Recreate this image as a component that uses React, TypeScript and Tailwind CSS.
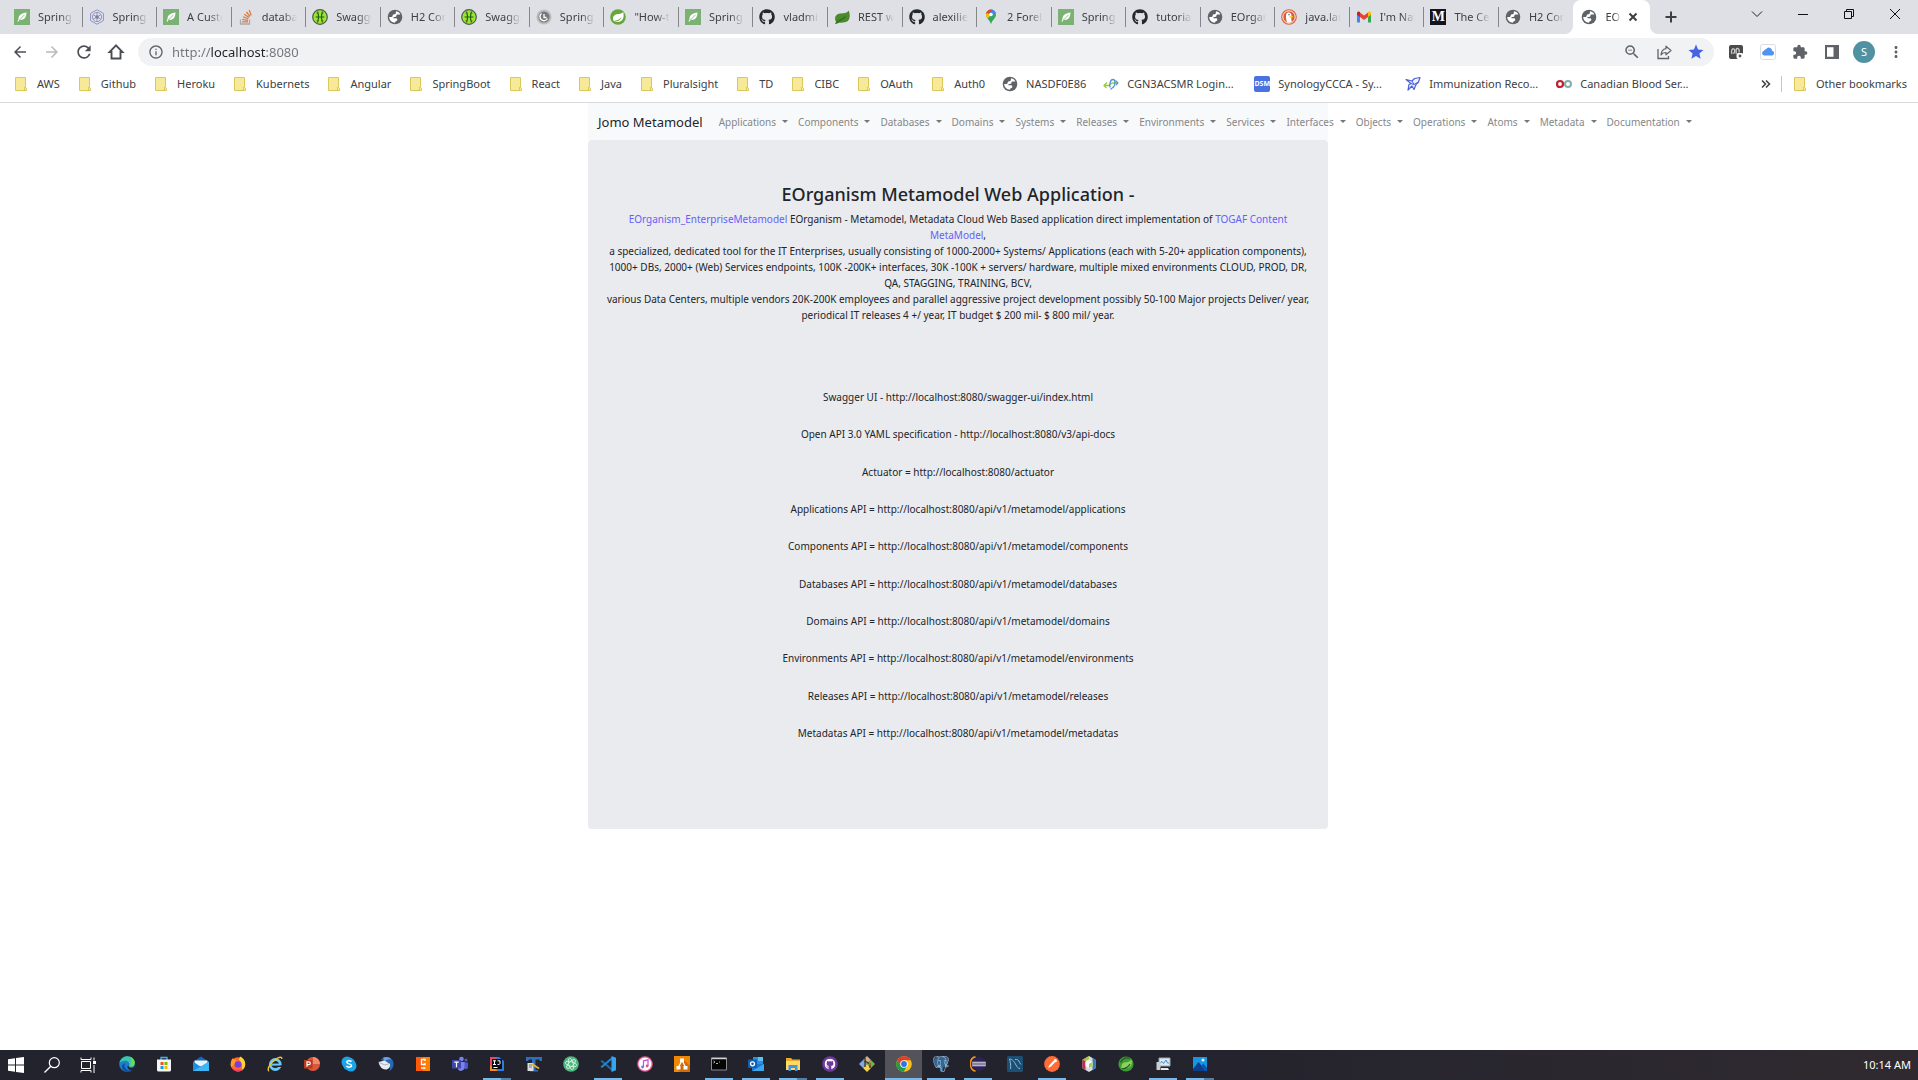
import React from "react";
import { FaGithub } from "react-icons/fa";
import { SiPostgresql } from "react-icons/si";
import {
  MdArrowBack,
  MdArrowForward,
  MdExtension,
  MdInfoOutline,
  MdMoreVert,
  MdRefresh,
  MdStar,
  MdZoomOut,
} from "react-icons/md";

type IconProps = { children: React.ReactNode };

function Svg({ children }: IconProps) {
  return (
    <svg viewBox="0 0 16 16" className="block size-4 shrink-0" aria-hidden="true">
      {children}
    </svg>
  );
}

/* ---------- favicons ---------- */

const Baeldung = () => (
  <Svg>
    <path d="M0 0h16v16H0Z" fill="#7bb274" />
    <path d="M12.500 3.500C8 4 4.500 6 4.500 10l-1 2.500.9.300 1.100-2c5 .7 6.800-2.800 7-7.300Z" fill="#fff" />
    <path d="M10.500 5.800 5.500 11" stroke="#7bb274" strokeWidth=".8" />
  </Svg>
);

const Globe = () => (
  <Svg>
    <circle cx="8" cy="8" r="7.300" fill="#5f6368" />
    <path
      d="M9.300 2.300c1.800.4 3.300 1.500 4.100 3.200h-2.700c-.8 0-1.300.5-1.300 1.200 0 .8-.6 1.200-1.400 1.200H6.500v1.400h2.400c.9 0 1.400.7 1.400 1.500 0 .9-.6 1.300-1.400 1.400-.5.100-.8.500-.8 1.500C4.800 13.600 2.300 11.200 2.200 8c1 .1 2.300.3 3-.3.700-.6.300-1.500 1.100-2.100.8-.6 1.700-.2 2.300-.9.600-.7-.1-1.700.7-2.400Z"
      fill="#fff"
    />
  </Svg>
);

const Github = () => <FaGithub className="size-4 shrink-0 text-[#24292f]" />;

const StackOverflow = () => (
  <Svg>
    <path d="M2.500 10.500v4.500h9v-4.500" fill="none" stroke="#a9a9ac" strokeWidth="1.300" />
    <path
      d="M4.200 12.800h5.800M4.300 10.400l5.700.9M4.900 7.800l5.400 2M6.300 5.200l4.700 3.400M8.400 3l3.700 4.500M11.200 1l2 5.500"
      stroke="#d97a3a"
      strokeWidth="1.200"
    />
  </Svg>
);

const Hexagon = () => (
  <Svg>
    <path d="M8 .8 14.400 4.400v7.200L8 15.200 1.600 11.600V4.400Z" fill="#e4e4ee" stroke="#8a90cf" />
    <circle cx="8" cy="8" r="4.600" fill="none" stroke="#8b8fa8" strokeWidth=".9" />
    <path d="M8 3.500v9M4 5.700l8 4.600M12 5.700l-8 4.600" stroke="#8b8fa8" strokeWidth=".9" />
    <circle cx="8" cy="8" r="1.800" fill="#7b7f9c" />
  </Svg>
);

const Swagger = () => (
  <Svg>
    <circle cx="8" cy="8" r="7.300" fill="#94ea30" stroke="#4c5a4a" strokeWidth="1.200" />
    <path
      d="M5.500 2.500c1.300 3.500 1.300 7.500 0 11M10.500 2.500c-1.300 3.500-1.300 7.500 0 11M3.500 8h9"
      fill="none"
      stroke="#2d5a1c"
      strokeWidth="1.200"
    />
    <path d="M4.500 4.200h1.500M4.500 11.800h1.500M10 4.200h1.500M10 11.800h1.500" stroke="#b0402c" />
  </Svg>
);

const GraySpiral = () => (
  <Svg>
    <circle cx="8" cy="8" r="7.600" fill="#bdbdbf" />
    <circle cx="8" cy="8" r="5.600" fill="#77787a" />
    <path d="M5.500 4.500a4 4 0 1 0 6 5" fill="none" stroke="#fff" strokeWidth="1.400" />
    <path d="M8 5v3.500h2.500" fill="none" stroke="#fff" strokeWidth="1.300" />
  </Svg>
);

const SpringRing = () => (
  <Svg>
    <circle cx="8" cy="8" r="7.800" fill="#68a63c" />
    <path
      d="M13.200 3c.9 3.200.8 8.600-3.700 9.700-2.300.6-4.600.3-6 .2 3.500-.2 7-1.700 8.200-5-1.800 2.300-4.800 3.400-8 4C2 8.700 3.500 6 6.800 5.300c2.500-.5 5-.5 6.400-2.300Z"
      fill="#fff"
    />
  </Svg>
);

const GreenLeaf = () => (
  <Svg>
    <path
      d="M14.700 1.500c2 5 1.400 10-3 11.600-3 1-6 .2-8.300 1.400l-1-1C-.5 9 1.500 5.300 6 4.600c3.300-.5 6.700.2 8.700-3.100Z"
      fill="#4a8a2c"
    />
    <path d="M1.500 14.800c3-4 7-4 10-7.200" fill="none" stroke="#2f6a1b" strokeWidth="1.200" />
  </Svg>
);

const MapsPin = () => (
  <Svg>
    <path d="M8 .5a5 5 0 0 1 5 5c0 4-4.200 5.500-5 10-.8-4.500-5-6-5-10a5 5 0 0 1 5-5Z" fill="#34a853" />
    <path d="M4.200 2.200A5 5 0 0 1 9.500.7L5 6.500 3 5.500c0-1.300.5-2.500 1.200-3.300Z" fill="#ea4335" />
    <path d="M9.500.7a5 5 0 0 1 3.200 3.100L8 8.500 6.500 4.400Z" fill="#4285f4" />
    <path d="M3 5.500c0 1.800.8 3 1.800 4.100L8 6 4 4Z" fill="#fbbc04" />
    <circle cx="8" cy="5.500" r="1.800" fill="#fff" />
  </Svg>
);

const DuckDuck = () => (
  <Svg>
    <circle cx="8" cy="8" r="7.800" fill="#d9603b" />
    <circle cx="8" cy="8" r="6.200" fill="none" stroke="#fff" strokeWidth=".9" />
    <path
      d="M6 13.500C5 10 4.500 6.500 5.500 4.500 7 2.500 10.500 3.500 10.500 6.500c0 1.500-.8 3 .3 6.300-1.300 1-3.300 1.200-4.800.7Z"
      fill="#fff"
    />
    <path d="M8.500 7.200h4l-1.500 1.600H8.500Z" fill="#fdd20a" />
    <circle cx="8" cy="5.700" r=".7" fill="#2d4f8e" />
  </Svg>
);

const Gmail = () => (
  <Svg>
    <path d="M1 4v9.500h3V7Z" fill="#4285f4" />
    <path d="M15 4v9.500h-3V7Z" fill="#34a853" />
    <path d="M4 3.500 8 6.500l4-3V8l-4 3-4-3Z" fill="#ea4335" />
    <path d="M1 4.300C1 2.500 3 2 4 3v5L1 5.800Z" fill="#c5221f" />
    <path d="M15 4.300C15 2.500 13 2 12 3v5l3-2.200Z" fill="#fbbc04" />
  </Svg>
);

const Medium = () => (
  <span className="flex size-4 shrink-0 items-center justify-center bg-[#12151c] font-['Liberation_Serif',serif] text-sm leading-4 font-bold text-white">
    M
  </span>
);

const Folder = () => (
  <Svg>
    <path d="M2.500 1.500h10v10l1 1v2h-11Z" fill="#f6e998" stroke="#dcc75a" />
    <path d="M11.500 14.500v-3.500" stroke="#dcc75a" />
  </Svg>
);

const Cgn = () => (
  <Svg>
    <path d="M1 9.500h4.500c1.500 0 2-2.500 4-2.500H15" fill="none" stroke="#9ac83c" strokeWidth="1.300" />
    <path d="M4 6.500 1 9.500 3.500 12" fill="none" stroke="#9ac83c" strokeWidth="1.200" />
    <path d="M7 11.500c-.8-3 .3-8 3-8s2.500 5.500.5 7.500c-1 1-2.300 1.300-3 2.500" fill="none" stroke="#4b93d2" strokeWidth="1.300" />
    <path d="m12.500 4.500 2.500 2.500-2 2" fill="none" stroke="#4b93d2" strokeWidth="1.100" />
  </Svg>
);

const Dsm = () => (
  <span className="flex size-4 shrink-0 items-center justify-center rounded-xs bg-[#4a72e0] text-[7px] leading-4 font-bold text-white">
    DSM
  </span>
);

const Bird = () => (
  <Svg>
    <path
      d="M1 3.500 7 5l2.500-2.500 5.500-1-1.500 4.500-2.500 2.500-2 5-2-3.500-4 4 1-5.500L6 7.500Z"
      fill="#eef1ff"
      stroke="#4a62d8"
      strokeWidth="1.200"
      strokeLinejoin="round"
    />
    <path d="M7 5l2 3.500 4.500-2.500M6 7.500l3 1" fill="none" stroke="#4a62d8" />
  </Svg>
);

const Blood = () => (
  <Svg>
    <circle cx="12" cy="8" r="3" fill="none" stroke="#7fb0ab" strokeWidth="2" />
    <circle cx="4" cy="8" r="3" fill="none" stroke="#c2202f" strokeWidth="2.200" />
  </Svg>
);

/* ---------- browser chrome ---------- */

const tabs: { title: string; Icon: React.FC }[] = [
  { title: "Spring Boot", Icon: Baeldung },
  { title: "Spring Data", Icon: Hexagon },
  { title: "A Custom", Icon: Baeldung },
  { title: "database", Icon: StackOverflow },
  { title: "Swagger", Icon: Swagger },
  { title: "H2 Console", Icon: Globe },
  { title: "Swagger", Icon: Swagger },
  { title: "Spring Boot", Icon: GraySpiral },
  { title: "\"How-to\"", Icon: SpringRing },
  { title: "Spring Boot", Icon: Baeldung },
  { title: "vladmi", Icon: Github },
  { title: "REST with", Icon: GreenLeaf },
  { title: "alexilie", Icon: Github },
  { title: "2 Forel", Icon: MapsPin },
  { title: "Spring Boot", Icon: Baeldung },
  { title: "tutorials", Icon: Github },
  { title: "EOrganism", Icon: Globe },
  { title: "java.lang", Icon: DuckDuck },
  { title: "I'm Nat", Icon: Gmail },
  { title: "The Cen", Icon: Medium },
  { title: "H2 Console", Icon: Globe },
];

const bookmarks: { title: string; Icon: React.FC; long?: boolean }[] = [
  { title: "AWS", Icon: Folder },
  { title: "Github", Icon: Folder },
  { title: "Heroku", Icon: Folder },
  { title: "Kubernets", Icon: Folder },
  { title: "Angular", Icon: Folder },
  { title: "SpringBoot", Icon: Folder },
  { title: "React", Icon: Folder },
  { title: "Java", Icon: Folder },
  { title: "Pluralsight", Icon: Folder },
  { title: "TD", Icon: Folder },
  { title: "CIBC", Icon: Folder },
  { title: "OAuth", Icon: Folder },
  { title: "Auth0", Icon: Folder },
  { title: "NASDF0E86", Icon: Globe },
  { title: "CGN3ACSMR Login...", Icon: Cgn, long: true },
  { title: "SynologyCCCA - Sy...", Icon: Dsm, long: true },
  { title: "Immunization Reco...", Icon: Bird, long: true },
  { title: "Canadian Blood Ser...", Icon: Blood, long: true },
];

const FADE = "[mask-image:linear-gradient(to_right,black_60%,transparent)]";

function TabStrip() {
  return (
    <div className="flex h-[34px] bg-[#dfe0e6] pl-2">
      <div className="flex min-w-0 max-w-[1642px] flex-1" role="tablist">
        {tabs.map(({ title, Icon }, i) => (
          <button key={i} role="tab" className="flex min-w-0 flex-1 items-center pl-1.5 text-left">
            <Icon />
            <span className={`ml-2 min-w-0 flex-1 overflow-hidden whitespace-nowrap ${FADE}`}>{title}</span>
            <span
              className={
                i === tabs.length - 1 ? "ml-2 h-5 w-px shrink-0" : "ml-2 h-5 w-px shrink-0 bg-[#85868b]"
              }
            />
          </button>
        ))}
        <div className="relative flex min-w-0 flex-1 items-center rounded-t-lg bg-white pl-2">
          <svg viewBox="0 0 8 8" className="absolute bottom-0 -left-2 size-2" aria-hidden="true">
            <path d="M8 0v8H0a8 8 0 0 0 8-8Z" fill="#fff" />
          </svg>
          <svg viewBox="0 0 8 8" className="absolute -right-2 bottom-0 size-2" aria-hidden="true">
            <path d="M0 0v8h8a8 8 0 0 1-8-8Z" fill="#fff" />
          </svg>
          <button role="tab" aria-selected="true" className="flex min-w-0 items-center">
            <Globe />
            <span className={`ml-2 w-4 overflow-hidden whitespace-nowrap ${FADE}`}>EOrganism</span>
          </button>
          <button aria-label="Close tab" className="ml-1">
            <svg viewBox="0 0 16 16" className="size-4" aria-hidden="true">
              <path d="m4.500 4.500 7 7m0-7-7 7" stroke="#3c4043" strokeWidth="2" />
            </svg>
          </button>
        </div>
      </div>
      <button aria-label="New tab" className="ml-[11px] flex w-5 items-center justify-center">
        <svg viewBox="0 0 16 16" className="size-4" aria-hidden="true">
          <path d="M8 2.500v11M2.500 8h11" stroke="#3c4043" strokeWidth="2" />
        </svg>
      </button>
      <div className="ml-auto flex h-7">
        <button aria-label="Search tabs" className="flex w-[46px] items-center justify-center">
          <svg viewBox="0 0 12 12" className="size-3" aria-hidden="true">
            <path d="m1 3.500 5 5 5-5" fill="none" stroke="#222" />
          </svg>
        </button>
        <button aria-label="Minimize" className="flex w-[46px] items-center justify-center">
          <svg viewBox="0 0 12 12" className="size-3" aria-hidden="true">
            <path d="M1 6.500h10" stroke="#111" />
          </svg>
        </button>
        <button aria-label="Restore" className="flex w-[46px] items-center justify-center">
          <svg viewBox="0 0 12 12" className="size-3" aria-hidden="true">
            <path d="M1.500 3.500h7v7h-7ZM3.500 3.500v-2h7v7h-2" fill="none" stroke="#111" />
          </svg>
        </button>
        <button aria-label="Close" className="flex w-[46px] items-center justify-center">
          <svg viewBox="0 0 12 12" className="size-3" aria-hidden="true">
            <path d="m1 1 10 10m0-10L1 11" stroke="#111" />
          </svg>
        </button>
      </div>
    </div>
  );
}

const toolButton = "flex h-8 w-8 shrink-0 items-center justify-center text-lg text-[#5f6368]";

function Toolbar() {
  return (
    <div className="flex h-9 items-center pr-1.5 pl-1">
      <button aria-label="Back" className={toolButton}>
        <MdArrowBack className="text-[#4b4f54]" />
      </button>
      <button aria-label="Forward" className={toolButton}>
        <MdArrowForward className="text-[#b9babd]" />
      </button>
      <button aria-label="Reload" className={toolButton}>
        <MdRefresh className="size-5 text-[#4b4f54]" />
      </button>
      <button aria-label="Home" className={toolButton}>
        <svg viewBox="0 0 18 18" className="size-[18px]" aria-hidden="true">
          <path d="M9 2.300 2.500 9h2v6.500h9V9h2Z" fill="none" stroke="#4b4f54" strokeWidth="1.900" />
        </svg>
      </button>
      <div className="ml-1.5 flex h-7 min-w-0 flex-1 items-center rounded-full bg-[#f1f2f4] pl-2.5">
        <MdInfoOutline className="size-4 shrink-0 text-[#5f6368]" />
        <label htmlFor="address" className="sr-only">
          Address
        </label>
        <input
          id="address"
          defaultValue="http://localhost:8080"
          className="ml-2 min-w-0 flex-1 bg-[linear-gradient(to_right,#70757a_39px,#202124_39px,#202124_94px,#70757a_94px)] bg-clip-text text-[13px] leading-5 text-transparent outline-none"
        />
        <button aria-label="Zoom" className={toolButton}>
          <MdZoomOut />
        </button>
        <button aria-label="Share" className={toolButton}>
          <svg viewBox="0 0 16 16" className="size-4" aria-hidden="true">
            <path d="M2 5v9.500h10.500V12" fill="none" stroke="#5f6368" strokeWidth="1.300" />
            <path
              d="M10 2.200 15 6.500l-5 4.300V8.500c-2.300 0-4 .8-5 2.500.3-3.500 2-5.800 5-6.300Z"
              fill="none"
              stroke="#5f6368"
              strokeWidth="1.200"
              strokeLinejoin="round"
            />
          </svg>
        </button>
        <button aria-label="Bookmarked" className={toolButton}>
          <MdStar className="text-[#4763e4]" />
        </button>
        <span className="w-0.5" />
      </div>
      <div className="ml-1.5 flex items-center">
        <button aria-label="Extension" className={toolButton}>
          <svg viewBox="0 0 16 16" className="size-4" aria-hidden="true">
            <rect x="1" y="1" width="14" height="14" rx="2" fill="#4a4a4a" />
            <path
              d="M4 10c-1.500-3 .5-6 2-5s.5 5-1 4M8 10c1-2-1-5 1-5.500s2.500 2 2 4"
              fill="none"
              stroke="#ccc"
              strokeWidth="1.300"
            />
            <rect x="8.500" y="9" width="7" height="6" rx="2" fill="#fff" />
            <circle cx="12" cy="12" r="1.400" fill="#555" />
          </svg>
        </button>
        <button aria-label="iCloud" className={toolButton}>
          <svg viewBox="0 0 16 16" className="size-4" aria-hidden="true">
            <rect x=".5" y=".5" width="15" height="15" rx="2" fill="#fff" stroke="#dadce0" />
            <path
              d="M4 11.500a2.300 2.300 0 0 1-.2-4.500 2.300 2.300 0 0 1 2.300-1.700 3.200 3.200 0 0 1 6 1.500 2.400 2.400 0 0 1 .2 4.700Z"
              fill="#4f94ee"
            />
          </svg>
        </button>
        <button aria-label="Extensions" className={toolButton}>
          <MdExtension className="size-4" />
        </button>
        <button aria-label="Side panel" className={toolButton}>
          <svg viewBox="0 0 16 16" className="size-4" aria-hidden="true">
            <path d="M1 1h14v14H1ZM3 3.200v9.600h6.500V3.200Z" fill="#5f6368" fillRule="evenodd" />
          </svg>
        </button>
        <button aria-label="Profile" className={toolButton}>
          <span className="flex size-[22px] items-center justify-center rounded-full bg-[#5192a2] text-[11px] text-white">
            S
          </span>
        </button>
        <button aria-label="Menu" className={toolButton}>
          <MdMoreVert />
        </button>
      </div>
    </div>
  );
}

function BookmarksBar() {
  return (
    <nav
      aria-label="Bookmarks"
      className="flex h-[33px] items-center border-b border-[#d9dade] pr-[11px] pb-1 pl-[13px] whitespace-nowrap"
    >
      <div className="flex gap-[17px]">
        {bookmarks.map(({ title, Icon, long }) => (
          <a key={title} href="#" className="flex items-center gap-2">
            <Icon />
            <span className={long ? "w-[110px]" : ""}>{title}</span>
          </a>
        ))}
      </div>
      <div className="ml-auto flex items-center">
        <button aria-label="More bookmarks" className="flex">
          <svg viewBox="0 0 10 10" className="size-2.5" aria-hidden="true">
            <path
              d="m1 1.500 3.500 3.500L1 8.500M5 1.500 8.500 5 5 8.500"
              fill="none"
              stroke="#3c4043"
              strokeWidth="1.500"
            />
          </svg>
        </button>
        <span className="mr-2.5 ml-2.5 h-4 w-px bg-[#c4c6ca]" />
        <a href="#" className="flex items-center gap-2">
          <Folder />
          Other bookmarks
        </a>
      </div>
    </nav>
  );
}

/* ---------- page ---------- */

const menus = [
  "Applications",
  "Components",
  "Databases",
  "Domains",
  "Systems",
  "Releases",
  "Environments",
  "Services",
  "Interfaces",
  "Objects",
  "Operations",
  "Atoms",
  "Metadata",
  "Documentation",
];

const endpoints = [
  "Swagger UI - http://localhost:8080/swagger-ui/index.html",
  "Open API 3.0 YAML specification - http://localhost:8080/v3/api-docs",
  "Actuator = http://localhost:8080/actuator",
  "Applications API = http://localhost:8080/api/v1/metamodel/applications",
  "Components API = http://localhost:8080/api/v1/metamodel/components",
  "Databases API = http://localhost:8080/api/v1/metamodel/databases",
  "Domains API = http://localhost:8080/api/v1/metamodel/domains",
  "Environments API = http://localhost:8080/api/v1/metamodel/environments",
  "Releases API = http://localhost:8080/api/v1/metamodel/releases",
  "Metadatas API = http://localhost:8080/api/v1/metamodel/metadatas",
];

function Page() {
  return (
    <main className="mx-auto w-full max-w-[740px] text-[10px] leading-4 text-[#212529]">
      <nav className="flex h-[37px] items-center bg-[#f8f9fb] px-2.5 whitespace-nowrap">
        <a href="#" className="text-[13px]">
          Jomo Metamodel
        </a>
        <div className="ml-4 flex gap-2.5">
          {menus.map((name) => (
            <button key={name} className="flex items-center gap-1.5 text-[#85878a]">
              {name}
              <span className="border-x-3 border-t-3 border-x-transparent border-t-[#75777a]" />
            </button>
          ))}
        </div>
      </nav>
      <section className="rounded-sm bg-[#eaebef] px-4 pt-[42px] pb-[88px] text-center">
        <h1 className="text-lg leading-6 font-medium">EOrganism Metamodel Web Application -</h1>
        <p className="mt-[5px]">
          <a href="#" className="text-[#6461f7]">
            EOrganism_EnterpriseMetamodel
          </a>{" "}
          EOrganism - Metamodel, Metadata Cloud Web Based application direct implementation of{" "}
          <a href="#" className="text-[#6461f7]">
            TOGAF Content
            <br />
            MetaModel
          </a>
          ,
          <br />
          a specialized, dedicated tool for the IT Enterprises, usually consisting of 1000-2000+ Systems/ Applications
          (each with 5-20+ application components),
          <br />
          1000+ DBs, 2000+ (Web) Services endpoints, 100K -200K+ interfaces, 30K -100K + servers/ hardware, multiple
          mixed environments CLOUD, PROD, DR,
          <br />
          QA, STAGGING, TRAINING, BCV,
          <br />
          various Data Centers, multiple vendors 20K-200K employees and parallel aggressive project development possibly
          50-100 Major projects Deliver/ year,
          <br />
          periodical IT releases 4 +/ year, IT budget $ 200 mil- $ 800 mil/ year.
        </p>
        <ul className="mt-[66px] flex h-[352px] flex-col justify-between">
          {endpoints.map((line) => (
            <li key={line}>{line}</li>
          ))}
        </ul>
      </section>
    </main>
  );
}

/* ---------- taskbar ---------- */

type Task = { name: string; art: React.ReactNode; state?: "open" | "stacked" | "active" };

const tasks: Task[] = [
  {
    name: "Edge",
    art: (
      <>
        <circle cx="8" cy="8" r="7.800" fill="#1b7fd0" />
        <path
          d="M.5 7C1.500 2.500 5 .2 8.500.2c4 0 7.300 3 7.300 6.600 0 3-2.500 4.200-4.500 4-1.500-.1-1.800-.8-1.300-1.500C11 7.500 9.500 4.800 6.500 4.800 3.500 4.800 1.300 6 .5 7Z"
          fill="#3fc6a5"
        />
        <path d="M11 .8c3 1 4.800 3.500 4.800 6 0 3-2.500 4.200-4.500 4C12.500 8 13 3.500 11 .8Z" fill="#6fd94f" />
        <path
          d="M6 7.500c-1.500 3.500 1 6.800 5 6.800 1.500 0 2.500-.5 3.300-1.300C12 17 4.500 17 3 11.500 2.500 9.500 4 7.500 6 7.500Z"
          fill="#0f4fa3"
        />
        <path d="M9.500 8.500c-.8 1.800.5 3.300 2.800 3.300 1.500 0 2.500-.5 3-1.300L16 13l-3 1c-3.500.5-6-2.500-3.500-5.500Z" fill="#24242e" />
      </>
    ),
  },
  {
    name: "Store",
    art: (
      <>
        <path d="M5 4V1.500h6V4" fill="none" stroke="#35b8f0" strokeWidth="1.300" />
        <path d="M1 3.500h14v10.500a1.500 1.500 0 0 1-1.500 1.500h-11A1.500 1.500 0 0 1 1 14Z" fill="#f4f5f7" />
        <path d="M4.500 6h3v3h-3Z" fill="#f25022" />
        <path d="M8.500 6h3v3h-3Z" fill="#7fba00" />
        <path d="M4.500 10h3v3h-3Z" fill="#00a4ef" />
        <path d="M8.500 10h3v3h-3Z" fill="#ffb900" />
      </>
    ),
  },
  {
    name: "Mail",
    art: (
      <>
        <path d="M0 6 8 .5 16 6Z" fill="#1668b8" />
        <path d="M1.500 4.500h13v6h-13Z" fill="#e9f3fb" />
        <path d="M0 5.500 8 11l8-5.500V15H0Z" fill="#1a8fe0" />
        <path d="M0 15 16 5.500V15Z" fill="#3eb6f4" />
      </>
    ),
  },
  {
    name: "Firefox",
    art: (
      <>
        <circle cx="8" cy="8.500" r="7.200" fill="#ff6a2b" />
        <path d="M10.500.5c3.500 2 5 5 4.700 8.500-.3 2.500-2 5-4 5.800C13 11 12.500 6 9 4c0-1.500.5-2.700 1.500-3.500Z" fill="#ffd43b" />
        <path d="M1 5.500C1.500 3.500 3 2 3 2c.5 1.500 2 2 3.500 2L5 7.500l-3.800 4C.6 9.500.5 7.500 1 5.500Z" fill="#ff9a2e" />
        <circle cx="8" cy="8.500" r="3.300" fill="#7a3fd8" />
        <path d="M2 12c2.500 4.500 9 4.800 12 .5-3.500 2-8.500 2-12-.5Z" fill="#f0386b" />
      </>
    ),
  },
  {
    name: "Internet Explorer",
    art: (
      <>
        <circle cx="8.300" cy="8.500" r="5" fill="none" stroke="#6cc8f4" strokeWidth="2.800" />
        <path d="M4.500 8.600h9" stroke="#6cc8f4" strokeWidth="2" />
        <path d="M9.500 10.500h7v-1Z" fill="#24242e" stroke="#24242e" />
        <path d="M2 15C-.5 14 3 7 8.500 3.300 12 1 15 .2 14.800 3" fill="none" stroke="#f3c52d" strokeWidth="1.400" />
      </>
    ),
  },
  {
    name: "PowerPoint",
    art: (
      <>
        <circle cx="9" cy="8" r="7" fill="#d9573a" />
        <path d="M9 1a7 7 0 0 1 7 7H9Z" fill="#f08a6c" />
        <path d="M0 4h8.500v8.500H0Z" fill="#b83b1d" />
        <path d="M3 10.800V5.800h1.800a1.400 1.400 0 0 1 0 2.900H3" fill="none" stroke="#fff" strokeWidth="1.200" />
      </>
    ),
  },
  {
    name: "Skype",
    art: (
      <>
        <circle cx="6" cy="6" r="5.500" fill="#1aa5e8" />
        <circle cx="10" cy="10" r="5.500" fill="#1aa5e8" />
        <circle cx="8" cy="8" r="6.500" fill="#1aa5e8" />
        <path
          d="M10.500 5.700C9.500 4.200 5.700 4.300 5.800 6.300c.1 2 4.700 1.200 4.700 3.300 0 2-4.200 2-5 .3"
          fill="none"
          stroke="#fff"
          strokeWidth="1.500"
        />
      </>
    ),
  },
  {
    name: "Thunderbird",
    art: (
      <>
        <path d="M3 3.500C5.500.5 11-.3 14 3.500c3 4 1.500 9.500-3 12 1.200-2 1.200-3.500.5-5.500L6 5.500Z" fill="#2a67b5" />
        <path d="M5 1.800c3-1.500 6.500-1 8.500 1.700-3-.8-5.500.2-6.500 1.700Z" fill="#6aa7e4" />
        <path d="m.5 6 6-1.500L12 8c.5 3-1.500 5.500-4.500 5.500C4 13.500 1.500 10.500.5 6Z" fill="#e8ecf1" />
        <path d="m1 6.500 6 2.500 4.500-1.500" fill="none" stroke="#a9b4c2" />
      </>
    ),
  },
  {
    name: "Calibre",
    art: (
      <>
        <path d="M1 1h14v14H1Z" fill="#ff5a0a" />
        <path d="M8 1h7v14H8Z" fill="#ff8000" />
        <path d="M10 5V3.500H6.500v5H10V7M6 12h4.500" fill="none" stroke="#fff" strokeWidth="1.400" />
      </>
    ),
  },
  {
    name: "Teams",
    art: (
      <>
        <circle cx="9.500" cy="3" r="2.300" fill="#7b83eb" />
        <circle cx="14" cy="4" r="1.600" fill="#5059c9" />
        <path d="M6 6h7v5a4 4 0 0 1-7 2.500Z" fill="#7b83eb" />
        <path d="M12.500 6.500H16V11c0 1.800-1.500 2.500-3.500 2Z" fill="#5059c9" />
        <path d="M0 4h9v8.500H0Z" fill="#4049a8" />
        <path d="M2.300 6.200h4.400M4.500 6.200v5" stroke="#fff" strokeWidth="1.200" />
      </>
    ),
  },
  {
    name: "IntelliJ IDEA",
    state: "stacked",
    art: (
      <>
        <path d="M1 1h9l5 4v10H5L1 11Z" fill="#2a7de1" />
        <path d="M1 1h7L2 15H1Z" fill="#e8476a" />
        <path d="M1 9v6h8Z" fill="#f58a2e" />
        <path d="M3 3h10v10H3Z" fill="#0c0c10" />
        <path
          d="M4 4.800h3M5.500 4.800v3.700M4 8.500h3M8.500 4.800h2.500v2.700q0 1.200-2.500 1M4.500 11.500h4"
          fill="none"
          stroke="#fff"
          strokeWidth="1"
        />
      </>
    ),
  },
  {
    name: "SQL Developer",
    art: (
      <>
        <path d="M0 1h16v4h-2l-1-1.500H9.500V14H12v1.500H4V14h2V3.500H3L2 5H0Z" fill="#2f70bb" />
        <path d="M1.500 7h6v8h-6Z" fill="#dcdde0" />
        <path d="M3 9h3M3 11h3" stroke="#777" />
        <path d="m6 8 7 4.500" stroke="#eda928" strokeWidth="2" />
      </>
    ),
  },
  {
    name: "Atom",
    art: (
      <>
        <circle cx="8" cy="8" r="7.800" fill="#4fb67f" />
        <g fill="none" stroke="#d9f3e5" strokeWidth=".9">
          <ellipse cx="8" cy="8" rx="5.800" ry="2.300" transform="rotate(15 8 8)" />
          <ellipse cx="8" cy="8" rx="5.800" ry="2.300" transform="rotate(75 8 8)" />
          <ellipse cx="8" cy="8" rx="5.800" ry="2.300" transform="rotate(135 8 8)" />
        </g>
      </>
    ),
  },
  {
    name: "VS Code",
    state: "open",
    art: (
      <>
        <path d="M.5 5.200 2 4l10 8.500V15Z" fill="#1a6fb5" />
        <path d="M.5 10.800 2 12l10-8.500V1Z" fill="#2489d0" />
        <path d="m11.500 0 4.500 1.800v12.400L11.500 16Z" fill="#34a5ee" />
      </>
    ),
  },
  {
    name: "iTunes",
    art: (
      <>
        <circle cx="8" cy="8" r="7.800" fill="#e85a8f" />
        <circle cx="8" cy="8" r="6.500" fill="#fff" />
        <path d="M6.500 11V4.800l4.500-1V10" fill="none" stroke="#c452d8" strokeWidth="1.200" />
        <circle cx="5.600" cy="11" r="1.400" fill="#5b7cf0" />
        <circle cx="10.100" cy="10" r="1.400" fill="#ef4d7f" />
      </>
    ),
  },
  {
    name: "draw.io",
    art: (
      <>
        <path d="M0 0h16v16H0Z" fill="#f08705" />
        <path d="m10 4 6 6v6H6l-3-3Z" fill="#d06d08" />
        <path d="M8 4.500 4.500 11M8 4.500l3.500 6.500" stroke="#fff" strokeWidth="1.300" />
        <path d="M6 2.500h4v3.500H6ZM2.500 10h4v3.500h-4ZM9.500 10h4v3.500h-4Z" fill="#fff" />
      </>
    ),
  },
  {
    name: "Command Prompt",
    state: "open",
    art: (
      <>
        <path d="M.500 2h15v12h-15Z" fill="#050505" stroke="#8c8d90" />
        <path d="M.500 2.500h15" stroke="#d2d3d5" strokeWidth="1.500" />
        <path d="m2.500 5 1.500 1-1.500 1M5 7.500h2M8 6h1" fill="none" stroke="#ddd" strokeWidth=".8" />
      </>
    ),
  },
  {
    name: "Outlook",
    state: "open",
    art: (
      <>
        <path d="M5 1h10v8H5Z" fill="#2a8fdd" />
        <path d="M10 1h5v4h-5Z" fill="#5cc3f5" />
        <path d="M4 8h12v7H4Z" fill="#1b78cc" />
        <path d="m4 15 12-7v7Z" fill="#39a6ee" />
        <path d="M0 3.500h9V12H0Z" fill="#0f5fb3" />
        <circle cx="4.500" cy="7.800" r="2" fill="none" stroke="#fff" strokeWidth="1.300" />
      </>
    ),
  },
  {
    name: "File Explorer",
    state: "stacked",
    art: (
      <>
        <path d="M1 2h5l1.500 1.500H15V14H1Z" fill="#e9a92b" />
        <path d="M1 5h14v9H1Z" fill="#ffd866" />
        <path d="M3.500 9h9v6H10v-3H6v3H3.500Z" fill="#4296de" />
      </>
    ),
  },
  {
    name: "GitHub Desktop",
    state: "open",
    art: (
      <>
        <circle cx="8" cy="8" r="7.800" fill="#6e3a9c" />
        <FaGithub x="2.500" y="2.500" width="11" height="11" size={11} color="#fff" />
      </>
    ),
  },
  {
    name: "Git",
    art: (
      <>
        <path d="M8 0 12 4 8 8 4 4Z" fill="#c8b58c" />
        <path d="M4 4 8 8l-4 4-4-4Z" fill="#7fa8e8" />
        <path d="m12 4 4 4-4 4-4-4Z" fill="#74b84a" />
        <path d="m8 8 4 4-4 4-4-4Z" fill="#f2d34a" />
        <path d="M6 2v9M6 5l5 3v4" fill="none" stroke="#33302f" strokeWidth="1.300" />
        <circle cx="11" cy="8" r="1.300" fill="#d84a3a" />
      </>
    ),
  },
  {
    name: "Chrome",
    state: "active",
    art: (
      <>
        <circle cx="8" cy="8" r="7.800" fill="#fbc116" />
        <path d="M1.200 4.200A7.800 7.800 0 0 1 14.800 4.200H8L5 9.800Z" fill="#e33b2e" />
        <path d="M1.200 4.200A7.800 7.800 0 0 0 7.700 15.800L11 10 5 9.500Z" fill="#219a4a" />
        <circle cx="8" cy="8" r="3.800" fill="#fff" />
        <circle cx="8" cy="8" r="2.900" fill="#2a73e8" />
      </>
    ),
  },
  {
    name: "PostgreSQL",
    state: "open",
    art: (
      <>
        <path d="M1 3C2 .5 5 .5 8 .8 11 .3 15 .5 15.500 3.500c.3 2.500-1 5-2 7l-3 .5-.5 4.500H7L6.500 11l-3 1C2 9 .5 6 1 3Z" fill="#336791" />
        <SiPostgresql size={16} color="#bdd3e6" />
      </>
    ),
  },
  {
    name: "Eclipse",
    state: "open",
    art: (
      <>
        <path d="M5.500 1C-1 3-1 13 5.500 15-1 17-2-1 5.500 1Z" fill="#f7941e" stroke="#f7941e" />
        <circle cx="9" cy="8" r="7" fill="#2c2255" />
        <path d="M2.200 6.200h13.600M2 8h14M2.200 9.800h13.600" stroke="#e6e4f2" strokeWidth="1.100" />
      </>
    ),
  },
  {
    name: "MySQL Workbench",
    art: (
      <>
        <rect width="16" height="16" rx="1.500" fill="#1c4f74" />
        <path
          d="M3.500 13C4 10 3.500 6 2.500 3c3 0 5 3 6.500 6 1 2 2 3.500 4 3.500M8 3.500c2-.5 4 .5 4.500 3l1.500 2"
          fill="none"
          stroke="#8fb9d3"
          strokeWidth="1"
        />
      </>
    ),
  },
  {
    name: "Postman",
    state: "open",
    art: (
      <>
        <circle cx="8" cy="8" r="7.900" fill="#ff6c37" />
        <path d="m4 12 1.500-3 4-4.300 1.500 1.500L7 10.500Z" fill="#fff" />
        <circle cx="11.300" cy="4.700" r="1.600" fill="#fff" />
      </>
    ),
  },
  {
    name: "NetBeans",
    art: (
      <>
        <path d="m8 0 6.500 3.800v8.400L8 16l-6.500-3.800V3.800Z" fill="#d6dde2" />
        <path d="m1.500 3.800 3-1.800v12l-3-1.800Z" fill="#c42a4a" />
        <path d="m8 0-6.500 3.800L4 5l4-2Z" fill="#a5c93a" />
        <path d="m14.500 3.800-3-1.800v12l3-1.800Z" fill="#3b78bd" />
        <path d="m8 4 3.500 2v4L8 12l-3.500-2V6Z" fill="#f7f8fa" />
        <path d="m8 8 3.500-2v4L8 12Z" fill="#a9cf45" />
      </>
    ),
  },
  {
    name: "Spring Tools",
    art: (
      <>
        <circle cx="8" cy="8" r="7.600" fill="#3f9c35" />
        <path
          d="M13.500 3.500c1.200 4-.2 8-4.500 8.500-2 .2-4-.2-5.500.3C3 9 4.500 6.500 8 6.300c2.200-.1 4.200-.8 5.500-2.800Z"
          fill="#8fce5f"
        />
        <path d="M4 13c3.500-.5 6.500-2 8-5M11.500 2.500c-3-1.500-7.500-.2-9 4" fill="none" stroke="#1d5c1e" strokeWidth="1.200" />
      </>
    ),
  },
  {
    name: "Performance Monitor",
    state: "open",
    art: (
      <>
        <path d="M4 2h11v8H4Z" fill="#dce9f3" stroke="#9aa6b0" />
        <path d="m5 7 2-1.500 1.500 2L11 4l1.500 3H14" fill="none" stroke="#3d8fc4" />
        <path d="M1.500 6h4v8h-4Z" fill="#c9ccd0" />
        <path d="M6 12h7l1 2H6Z" fill="#e8eaec" />
      </>
    ),
  },
  {
    name: "Photos",
    state: "stacked",
    art: (
      <>
        <path d="M1 1h14v14H1Z" fill="#1796e6" />
        <path d="M1 13 6.500 6l7.500 9H1Z" fill="#0a3f8c" />
        <path d="m9 10 2.500-2.500L15 12v3h-2Z" fill="#0b56ae" />
        <circle cx="11" cy="4" r="1.500" fill="#e6f5ff" />
      </>
    ),
  },
];

function Taskbar() {
  return (
    <footer className="flex h-[30px] items-stretch bg-linear-to-r from-[#23232d] from-60% to-[#302a30] text-white">
      <button aria-label="Start" className="flex w-9 items-center justify-center pr-1">
        <Svg>
          <path d="m0 2.300 7-1v6.200H0ZM8 1.100 16 0v7.500H8ZM0 8.500h7v6.200l-7-1ZM8 8.500h8V16l-8-1.100Z" fill="#fff" />
        </Svg>
      </button>
      <button aria-label="Search" className="flex w-9 items-center justify-center pr-1">
        <Svg>
          <circle cx="10.300" cy="5.700" r="5" fill="none" stroke="#fff" strokeWidth="1.200" />
          <path d="M6.800 9.200.5 15.500" stroke="#fff" strokeWidth="1.300" />
        </Svg>
      </button>
      <button aria-label="Task view" className="flex w-9 items-center justify-center pr-1">
        <Svg>
          <path d="M1.500 4.500h9v7h-9ZM1 .5v2h10v-2M1 15.500v-2h10v2" fill="none" stroke="#fff" />
          <path d="M14 .5v3M14 8v8" stroke="#fff" />
          <path d="M13 4h3v3h-3Z" fill="#fff" />
        </Svg>
      </button>
      {tasks.map(({ name, art, state }) => (
        <button
          key={name}
          aria-label={name}
          className={
            state === "active"
              ? "grid w-[37px] grid-rows-[28px_2px] justify-items-center bg-[#545359]"
              : "grid w-[37px] grid-rows-[28px_2px] justify-items-center"
          }
        >
          <span className="self-center">
            <Svg>{art}</Svg>
          </span>
          {state === "open" && <span className="w-7 bg-[#76b9ed]" />}
          {state === "active" && <span className="w-full bg-[#76b9ed]" />}
          {state === "stacked" && (
            <span className="flex w-7">
              <span className="flex-2 bg-[#76b9ed]" />
              <span className="flex-1 bg-[#537fa5]" />
            </span>
          )}
        </button>
      ))}
      <time className="ml-auto self-center pr-[7px] text-[11px]">10:14 AM</time>
    </footer>
  );
}

export default function App() {
  return (
    <div className="flex min-h-screen flex-col overflow-hidden bg-white font-['Noto_Sans',sans-serif] text-[11px] leading-4 text-[#3c4043]">
      <header>
        <TabStrip />
        <Toolbar />
        <BookmarksBar />
      </header>
      <div className="flex-1 pr-0.5">
        <Page />
      </div>
      <Taskbar />
    </div>
  );
}
